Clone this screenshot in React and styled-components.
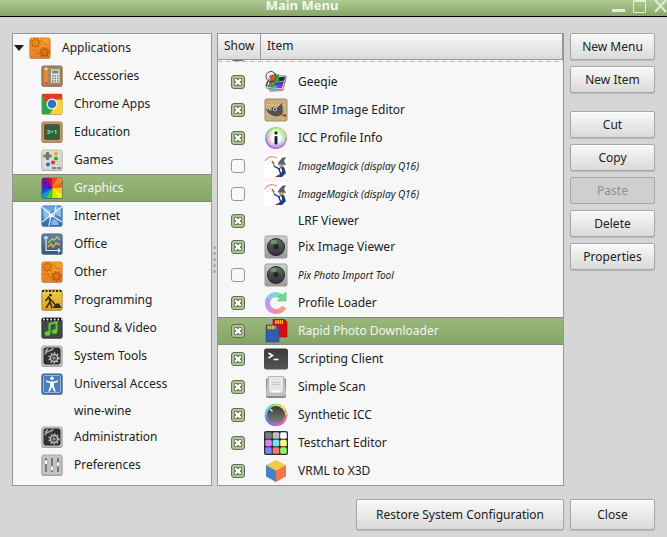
import { useLayoutEffect, useRef, useState } from "react";
import styled, { createGlobalStyle } from "styled-components";

const categories = [
   { name: "Accessories", icon: "accessories" },
   { name: "Chrome Apps", icon: "chrome" },
   { name: "Education", icon: "education" },
   { name: "Games", icon: "games" },
   { name: "Graphics", icon: "graphics" },
   { name: "Internet", icon: "internet" },
   { name: "Office", icon: "office" },
   { name: "Other", icon: "other" },
   { name: "Programming", icon: "programming" },
   { name: "Sound & Video", icon: "sound" },
   { name: "System Tools", icon: "system" },
   { name: "Universal Access", icon: "access" },
   { name: "wine-wine" },
   { name: "Administration", icon: "system" },
   { name: "Preferences", icon: "preferences" },
];

const launchers = [
   { id: 0, name: "", shown: true },
   { id: 1, name: "Geeqie", icon: "geeqie", shown: true },
   { id: 2, name: "GIMP Image Editor", icon: "gimp", shown: true },
   { id: 3, name: "ICC Profile Info", icon: "iccInfo", shown: true },
   { id: 4, name: "ImageMagick (display Q16)", icon: "magick", shown: false },
   { id: 5, name: "ImageMagick (display Q16)", icon: "magick", shown: false },
   { id: 6, name: "LRF Viewer", shown: true, short: true },
   { id: 7, name: "Pix Image Viewer", icon: "pix", shown: true },
   { id: 8, name: "Pix Photo Import Tool", icon: "pix", shown: false },
   { id: 9, name: "Profile Loader", icon: "loader", shown: true },
   { id: 10, name: "Rapid Photo Downloader", icon: "rapid", shown: true },
   { id: 11, name: "Scripting Client", icon: "terminal", shown: true },
   { id: 12, name: "Simple Scan", icon: "scan", shown: true },
   { id: 13, name: "Synthetic ICC", icon: "synthetic", shown: true },
   { id: 14, name: "Testchart Editor", icon: "testchart", shown: true },
   { id: 15, name: "VRML to X3D", icon: "vrml", shown: true },
];

// rounded square that most of the category icons sit on
const Tile = ({ fill, stroke }) => (
   <>
      <rect x="1.5" y="2.5" width="21" height="20.5" rx="2" fill="#000" opacity=".35" />
      <rect x="2" y="2" width="20" height="20" rx="1.5" fill={fill} stroke={stroke} />
   </>
);

const Gear = ({ x, y, r, color, width = 1.6 }) => (
   <g transform={`translate(${x} ${y})`} stroke={color} fill="none">
      <circle r={r} strokeWidth={width} />
      <circle r={r + 1.4} strokeWidth="1.6" strokeDasharray="1.5 1.7" />
      <circle r={r / 3} strokeWidth="1" />
   </g>
);

const wedge = (i, n, r) => {
   const a = (i / n) * Math.PI * 2;
   const b = ((i + 1) / n) * Math.PI * 2;
   return `M12 12L${12 + r * Math.sin(a)} ${12 - r * Math.cos(a)}L${12 + r * Math.sin(b)} ${12 - r * Math.cos(b)}Z`;
};

const wheel = ["#f4442e", "#f98b1c", "#f9601c", "#fdc70c", "#f8f400", "#c5ee0a", "#4ed321", "#1699c9", "#2347dc", "#5a1cc0", "#7c0a9e", "#c80d6b"];
const ring = ["#e9e66b", "#b8ec5c", "#79e86c", "#58e8b5", "#58d5ec", "#5b95f4", "#7a68f2", "#b65df0", "#f05be2", "#f5609c", "#f67d6a", "#f3b962"];

// ring runs clockwise from the top right
const Ring = ({ width }) => {
   const point = (i) => {
      const a = ((9 - i) / 12) * Math.PI * 2;
      return `${12 + 10 * Math.sin(a)} ${12 - 10 * Math.cos(a)}`;
   };
   return ring.map((c, i) => (
      <path
         key={c}
         d={`M${point(i + 7)}A10 10 0 0 0 ${point(i + 8.1)}`}
         stroke={c}
         strokeWidth={width}
         fill="none"
      />
   ));
};

const icons = {
   other: (
      <>
         <Tile fill="url(#orange)" stroke="#e0842a" />
         <Gear x={7.5} y={7} r={3.2} color="#cf6f0c" />
         <Gear x={16.5} y={16.5} r={3.2} color="#bf590e" />
         <path d="M3 14c3-1 4 0 6 1l1 4M13 3l3 5 5 1" stroke="#d67a18" strokeWidth="1.2" fill="none" />
      </>
   ),
   accessories: (
      <>
         <Tile fill="#a98158" stroke="#8f6b47" />
         <path d="M3 4.5h18M3 9h18M3 14h18M3 19h18" stroke="#c29a6e" />
         <path d="M4.5 6l1.700-3.5 1.700 3.5v14H4.500z" fill="#f08a24" />
         <path d="M4.5 6l1.700-3.5L7.900 6z" fill="#f3dfc0" />
         <path d="M4.500 18h3.400v2.500H4.500z" fill="#d55" />
         <rect x="10.5" y="5" width="9.5" height="14" rx="1" fill="#e9e9e3" stroke="#7b654f" strokeWidth=".6" />
         <rect x="12" y="6.500" width="6.500" height="3" fill="#5f9b82" />
         <path d="M12 12h7M12 14.500h7M12 17h7" stroke="#777" strokeWidth="1.300" strokeDasharray="1.500 1" />
      </>
   ),
   chrome: (
      <>
         <Tile fill="#fdd23a" stroke="#d7b63b" />
         <path d="M2 2h20v6H12L8 14 2 4z" fill="#dd3b2c" />
         <path d="M2 4l6 9 5 4-3 5H2z" fill="#2fa14f" />
         <path d="M12 7.500h10V22H10l5-7z" fill="#fdd32f" />
         <circle cx="12" cy="12" r="5.500" fill="#f4f4f4" />
         <circle cx="12" cy="12" r="4.300" fill="#3572b8" />
      </>
   ),
   education: (
      <>
         <Tile fill="#c69a68" stroke="#a57a4c" />
         <rect x="4.500" y="4.500" width="15" height="15" rx="1" fill="#2d6145" stroke="#6b4d2c" />
         <text x="12" y="14" textAnchor="middle" fontFamily="Noto Sans, sans-serif" fontSize="6" fontWeight="700" fill="#b7e08c">3+1</text>
      </>
   ),
   games: (
      <>
         <Tile fill="#dcdcd2" stroke="#c1c1b6" />
         <path d="M6 4h3v2.500h2.500v3H9V12H6V9.500H3.500v-3H6z" fill="#77776f" />
         <circle cx="16" cy="5.500" r="2" fill="#f0a91c" />
         <circle cx="16" cy="10.500" r="2" fill="#2eaa2e" />
         <circle cx="13" cy="14.500" r="2" fill="#e23325" />
         <circle cx="8" cy="16.500" r="2" fill="#2a6cdc" />
         <path d="M12 20h9" stroke="#6b6b63" strokeWidth="1.500" strokeDasharray="4 1" />
         <path d="M17 14h4M17 16.500h4" stroke="#aaa99e" strokeDasharray="1 1" />
      </>
   ),
   graphics: (
      <>
         <Tile fill="#555" stroke="#6b6b6b" />
         <g clipPath="url(#tileClip)">
            {wheel.map((c, i) => (
               <path key={c} d={wedge(i, 12, 16)} fill={c} stroke={c} strokeWidth=".3" />
            ))}
            <path d="M12 12c-3-3-4-6-4-10M12 12c-4-1-7-3-9-6M12 12c-4 1-7 1-10 0M12 12c1 4 0 7-2 10" stroke="#0003" fill="none" strokeWidth=".8" />
         </g>
      </>
   ),
   internet: (
      <>
         <Tile fill="url(#blue)" stroke="#3c78b7" />
         <path d="M3 6c4-3 5 1 8 0l-2 6-5 3zM14 4c3-1 5 0 7 3v6l-5-2zM12 16c3-2 6 0 7 5h-8z" fill="#9cc7ee" opacity=".8" />
         <path d="M2 3l9 8 11-8M11 11L9 22M2 18l9-7 11 7M16 2l-2 10" stroke="#e6f3fd" strokeWidth="1.200" fill="none" />
         <circle cx="11" cy="11.500" r="2" fill="#fff" />
      </>
   ),
   office: (
      <>
         <Tile fill="url(#slate)" stroke="#49627f" />
         <path d="M6 4.500v14h14M4 6.500l2-2 2 2M18 16.500l2 2-2 2" stroke="#e3e8ee" strokeWidth="1.200" fill="none" />
         <path d="M8 11l4-4 2 1 3-3 3 3" stroke="#a9cf45" strokeWidth="1.500" fill="none" />
         <path d="M8 15l3-3 2 3 3-4 4 2" stroke="#e8b12c" strokeWidth="1.500" fill="none" />
      </>
   ),
   programming: (
      <>
         <Tile fill="url(#yellow)" stroke="#c69426" />
         <path d="M2 3h20" stroke="#2e2a20" strokeWidth="2" strokeDasharray="2 1.500" />
         <circle cx="10.500" cy="7.200" r="1.400" fill="#332b16" />
         <path d="M9 8.500L5.500 13M9 9l1 5-4 6M10 14l2 6M9 10l4 4 3 4" stroke="#332b16" strokeWidth="1.500" fill="none" />
         <path d="M12.500 20l4-4.500h2.500l2.500 4.500z" fill="#332b16" />
      </>
   ),
   sound: (
      <>
         <Tile fill="#464646" stroke="#343434" />
         <path d="M2 3.500h20" stroke="#111" strokeWidth="3" />
         <path d="M3 3.500h19" stroke="#eee" strokeWidth="2" strokeDasharray="1.800 1.800" />
         <path d="M9.500 17V8l7-2v9.500" stroke="#56d42b" strokeWidth="2" fill="none" />
         <ellipse cx="7.500" cy="17.500" rx="2.800" ry="2.300" fill="#56d42b" />
         <ellipse cx="14.500" cy="15.500" rx="2.800" ry="2.300" fill="#56d42b" />
      </>
   ),
   system: (
      <>
         <Tile fill="#c9c9c9" stroke="#a8a8a8" />
         <rect x="4" y="4" width="16" height="16" rx="1.500" fill="#333" stroke="#222" />
         <Gear x={14} y={14} r={3.500} color="#bcbcbc" width={1.400} />
         <path d="M4.500 10c2-1 2-3 4-3s3-2 5-2.500M5 7.500l3-3" stroke="#a9a9a9" strokeWidth="1.600" fill="none" />
      </>
   ),
   access: (
      <>
         <Tile fill="#4c7fb4" stroke="#2f5f95" />
         <rect x="3.500" y="3.500" width="17" height="17" rx="1" fill="none" stroke="#90b5da" />
         <circle cx="12" cy="6.200" r="1.700" fill="#fff" />
         <path d="M6 8.500l4.500 1h3l4.500-1v1.500l-4 1v3.500l1.800 5h-1.600L12 15l-2.200 4.500H8.200l1.800-5V11l-4-1z" fill="#fff" />
      </>
   ),
   preferences: (
      <>
         <Tile fill="#c4c4c4" stroke="#a5a5a5" />
         <path d="M6 5v14M12 5v14M18 5v14" stroke="#555" strokeWidth="1.400" />
         <g fill="#f6f6f6" stroke="#777" strokeWidth=".6">
            <rect x="4.200" y="7" width="3.600" height="4.500" rx="1" />
            <rect x="10.200" y="13" width="3.600" height="4.500" rx="1" />
            <rect x="16.200" y="9" width="3.600" height="4.500" rx="1" />
         </g>
      </>
   ),
   geeqie: (
      <>
         <path d="M3 17l3 5 13-1 4-14-1-1z" fill="#555" opacity=".5" />
         <path d="M6 5l16 1-3 14-17-2z" fill="#fff" stroke="#666" strokeWidth=".7" />
         <path d="M6 6l6-3v9l-7 3z" fill="#c33b1e" />
         <path d="M11 5l4-1v8l-5 1z" fill="#2ea43a" />
         <path d="M15 7l6-.5-.7 4-5.300 1z" fill="#222a44" />
         <path d="M10 13l10-2-1 4-9 0z" fill="#2447c8" />
         <path d="M4 15l7-2-1 5-7-1z" fill="#1fa653" />
         <path d="M10 14.500h9l-1 4-9-.500z" fill="#a92bb8" />
         <path d="M9 16h4v2.500H9z" fill="#28c3cf" />
         <circle cx="7" cy="6.500" r="5" fill="#fff" fillOpacity=".15" stroke="#444" />
         <path d="M4 11l-2 5" stroke="#444" strokeWidth="1.500" />
      </>
   ),
   gimp: (
      <>
         <rect x="1" y="1" width="22" height="22" rx="1.500" fill="#c9ac7c" stroke="#a58a61" />
         <path d="M2 7h20M2 17h20" stroke="#d9bf92" />
         <path d="M2 11c2 1 3 0 5-1s4 0 6 0l5-5 1 9c-1 4-5 5-9 4s-6-3-8-7z" fill="#53504b" />
         <circle cx="6.500" cy="11" r="1.500" fill="#eee" />
         <circle cx="11" cy="11.500" r="1.800" fill="#eee" />
         <circle cx="6.800" cy="11" r=".8" />
         <circle cx="11" cy="11.500" r=".9" />
         <path d="M13 15l8 3" stroke="#8a5529" strokeWidth="1.300" />
         <path d="M19 16l3 1v2z" fill="#222" />
      </>
   ),
   iccInfo: (
      <>
         <circle cx="12" cy="12" r="10.800" fill="#8a8a8a" />
         {ring.map((c, i) => (
            <path key={c} d={wedge(i, 12, 10)} fill={ring[(i + 1) % 12]} />
         ))}
         <Ring width={1.300} />
         <circle cx="12" cy="12" r="9.700" fill="url(#halo)" />
         <rect x="10.500" y="5.500" width="3" height="3" rx="1" fill="#222" />
         <rect x="10.500" y="10" width="3" height="8.500" rx="1" fill="#222" />
      </>
   ),
   magick: (
      <>
         <rect width="24" height="24" fill="#fff" />
         <path d="M1 7c3-5 8-5 12-3" stroke="#f08a8a" strokeWidth="1.300" fill="none" />
         <path d="M3 10l2-1M5 5l1 3M9 2l1 2M7 9l2 1" stroke="#d9cc90" strokeWidth=".8" />
         <path d="M14 9l4-5 4-1-2 4 2 4-8-.500z" fill="#59616d" />
         <path d="M15 10.500h5l-1 3.500h-3z" fill="#c98a68" />
         <path d="M9 9l2 3 4 2 5-1 2 6-4 4h-7l5-3-2-5-4-2z" fill="#233a86" />
         <path d="M16 14l2 1v4l-2-2z" fill="#eee" />
         <path d="M8 7l2 3" stroke="#c05c3b" strokeWidth="1.500" />
         <path d="M12 23l4-2" stroke="#c0392b" />
      </>
   ),
   pix: (
      <>
         <rect x="1" y="1" width="22" height="22" rx="1.500" fill="url(#steel)" stroke="#9a9a9a" />
         <circle cx="12" cy="12" r="9" fill="#222" />
         <circle cx="12" cy="12" r="8" fill="url(#lens)" />
         <circle cx="12" cy="12" r="3" fill="#1e2a1e" stroke="#3d4d3c" strokeWidth=".7" />
         <ellipse cx="9.500" cy="7" rx="3.500" ry="2" fill="#b7cdb0" opacity=".4" />
      </>
   ),
   loader: (
      <>
         <g fill="none" strokeWidth="5">
            <path d="M18 6.500A8.500 8.500 0 0 0 11 3.800" stroke="#7fdcae" />
            <path d="M11.500 3.700A8.500 8.500 0 0 0 4.500 8" stroke="#8acbe6" />
            <path d="M4.700 7.500A8.500 8.500 0 0 0 4 15" stroke="#a6a4ee" />
            <path d="M3.800 14.500A8.500 8.500 0 0 0 9 20" stroke="#dc8fe1" />
            <path d="M8.500 19.800A8.500 8.500 0 0 0 15 20" stroke="#f787ad" />
            <path d="M14.500 20.200A8.500 8.500 0 0 0 20 16" stroke="#f69c7c" />
         </g>
         <path d="M22 1.500v8.500h-8.500l2.800-2.800-2-2L18 4z" fill="#6edb91" stroke="#4dbb76" strokeWidth=".6" />
      </>
   ),
   rapid: (
      <>
         <path d="M9 0h11l3 3v15H9z" fill="#d40f0f" stroke="#a50b0b" strokeWidth=".6" />
         <path d="M11 3h8" stroke="#f2c32a" strokeWidth="3.500" strokeDasharray="1.700 .6" />
         <path d="M2 6h10l3 3v14H2z" fill="#2f5fa6" stroke="#254a83" strokeWidth=".6" />
         <path d="M3.500 8.500h8" stroke="#f2c32a" strokeWidth="3.500" strokeDasharray="1.700 .6" />
      </>
   ),
   terminal: (
      <>
         <rect x="0" y="1.500" width="24" height="21" rx="2.500" fill="url(#dark)" />
         <path d="M4.500 6l4 2.500-4 2.500M9.500 12.500h5" stroke="#fff" strokeWidth="1.600" fill="none" />
      </>
   ),
   scan: (
      <>
         <rect x="2" y="3" width="20" height="20" rx="2" fill="#8b8b8b" />
         <path d="M4 1h16l2 18a2 2 0 0 1-2 2H4a2 2 0 0 1-2-2z" fill="#c5c5c5" />
         <path d="M4.500 1.500h15V18h-15z" fill="#e6e6e6" stroke="#aaa" strokeWidth=".6" />
         <path d="M9 7.500h7M9 9.500h7" stroke="#bbb" strokeWidth=".8" />
         <path d="M8 16.500h8" stroke="#fff" strokeWidth="2" strokeDasharray="1.600 .5" />
         <circle cx="18.500" cy="20.500" r="1" fill="#82e02c" />
      </>
   ),
   synthetic: (
      <>
         <circle cx="12" cy="12" r="11.300" fill="#9a9a9a" />
         <Ring width={2.200} />
         <circle cx="12" cy="12" r="9" fill="url(#knob)" />
         <path d="M6 6l2.500 2.500" stroke="#eee" strokeWidth="1.200" />
      </>
   ),
   testchart: (
      <>
         <rect width="24" height="24" rx="2" fill="#2f2f2f" />
         {["#7b7b7b", "#bdbdbd", "#fff", "#e07cf7", "#74e5fb", "#fcfa7c", "#7488fa", "#fb7373", "#8df76b"].map((c, i) => (
            <rect key={c} x={1.2 + (i % 3) * 7.5} y={1.2 + Math.floor(i / 3) * 7.5} width="6.600" height="6.600" rx="1.600" fill={c} />
         ))}
      </>
   ),
   vrml: (
      <>
         <path d="M12 1l10 5-10 5.500L2 6z" fill="#f6c945" />
         <path d="M2 6l10 5.500V23L2 17.500z" fill="#4a80c6" />
         <path d="M22 6l-10 5.500V23l10-5.500z" fill="#f5744a" />
      </>
   ),
};

// gradients shared by the icons
const Gradients = () => {
   const list = [
      ["orange", "#f9a52f", "#e67d22"],
      ["blue", "#72aee6", "#2567ad"],
      ["slate", "#6585ab", "#3a5270"],
      ["yellow", "#f1cd4c", "#dfa021"],
      ["steel", "#cfcfcf", "#989898"],
      ["lens", "#55724f", "#3d2a44"],
      ["dark", "#3b3b3b", "#555"],
      ["knob", "#3a3a3a", "#828282"],
   ];
   return (
      <Defs aria-hidden="true">
         <defs>
            {list.map(([id, from, to]) => (
               <linearGradient key={id} id={id} x1="0" y1="0" x2="0" y2="1">
                  <stop offset="0" stopColor={from} />
                  <stop offset="1" stopColor={to} />
               </linearGradient>
            ))}
            <radialGradient id="halo">
               <stop offset=".4" stopColor="#fff" />
               <stop offset="1" stopColor="#fff" stopOpacity=".25" />
            </radialGradient>
            <clipPath id="tileClip">
               <rect x="2" y="2" width="20" height="20" rx="1.500" />
            </clipPath>
         </defs>
      </Defs>
   );
};

const Icon = ({ name }) => (
   <IconBox viewBox="0 0 24 24" aria-hidden="true">
      {icons[name]}
   </IconBox>
);

const App = () => {
   const [category, setCategory] = useState("Graphics");
   const [selected, setSelected] = useState(10);
   const [items, setItems] = useState(launchers);
   const listRef = useRef(null);

   useLayoutEffect(() => {
      listRef.current.scrollTop = listRef.current.scrollHeight;
   }, []);

   const handleToggle = (id) => {
      setItems(items.map((m) => (m.id === id ? { ...m, shown: !m.shown } : m)));
   };

   return (
      <Window>
         <GlobalStyle />
         <Gradients />
         <TitleBar>
            <Title>Main Menu</Title>
            <WindowControls>
               <ControlButton aria-label="Minimize">
                  <svg width="13" height="13"><path d="M0 10.500h13" stroke="currentColor" strokeWidth="3" /></svg>
               </ControlButton>
               <ControlButton aria-label="Maximize">
                  <svg width="13" height="13"><path d="M.5 1v11.500h12V1" stroke="currentColor" fill="none" /><path d="M0 1h13" stroke="currentColor" strokeWidth="2" /></svg>
               </ControlButton>
               <ControlButton aria-label="Close window">
                  <svg width="13" height="13"><path d="M1 0l11 12M12 0L1 12" stroke="currentColor" strokeWidth="2" /></svg>
               </ControlButton>
            </WindowControls>
         </TitleBar>
         <Body>
            <Panels>
               <Tree>
                  <TreeRow $root>
                     <Arrow viewBox="0 0 10 6" aria-hidden="true"><path d="M0 0h10L5 6z" fill="#1a1a1a" /></Arrow>
                     <Icon name="other" />
                     Applications
                  </TreeRow>
                  {categories.map((c) => (
                     <TreeRow
                        key={c.name}
                        $short={!c.icon}
                        $active={c.name === category}
                        onClick={() => setCategory(c.name)}
                     >
                        <Icon name={c.icon} />
                        {c.name}
                     </TreeRow>
                  ))}
               </Tree>
               <Handle>
                  {[0, 1, 2, 3, 4].map((n) => (
                     <Dot key={n} />
                  ))}
               </Handle>
               <ItemTable>
                  <Head>
                     <HeadRow>
                        <HeadCell>Show</HeadCell>
                        <HeadCell>Item</HeadCell>
                     </HeadRow>
                  </Head>
                  <ItemBody ref={listRef}>
                     {items.map((m) => (
                        <ItemRow
                           key={m.id}
                           $short={m.short}
                           $active={m.id === selected}
                           onClick={() => setSelected(m.id)}
                        >
                           <CheckCell>
                              <Check
                                 type="checkbox"
                                 id={`show-${m.id}`}
                                 checked={m.shown}
                                 onChange={() => handleToggle(m.id)}
                              />
                           </CheckCell>
                           <NameCell>
                              <Icon name={m.icon} />
                              <ItemName htmlFor={`show-${m.id}`} $hidden={!m.shown}>{m.name}</ItemName>
                           </NameCell>
                        </ItemRow>
                     ))}
                  </ItemBody>
               </ItemTable>
               <Actions>
                  <ActionGroup>
                     <Button>New Menu</Button>
                     <Button>New Item</Button>
                  </ActionGroup>
                  <ActionGroup>
                     <Button>Cut</Button>
                     <Button>Copy</Button>
                     <Button disabled>Paste</Button>
                     <Button>Delete</Button>
                     <Button>Properties</Button>
                  </ActionGroup>
               </Actions>
            </Panels>
            <Footer>
               <Button $large>Restore System Configuration</Button>
               <Button $large>Close</Button>
            </Footer>
         </Body>
      </Window>
   );
};

const GlobalStyle = createGlobalStyle`
   * {
      box-sizing: border-box;
   }

   body {
      margin: 0;
      font: 12px/16px "Noto Sans", sans-serif;
      color: #212121;
   }

   button {
      font: inherit;
      color: inherit;
   }
`;

const Window = styled.div`
   display: flex;
   flex-direction: column;
   height: 100vh;
   background: #d6d6d6;
   overflow: hidden;
`;

const Defs = styled.svg`
   position: absolute;
   width: 0;
   height: 0;
`;

const TitleBar = styled.header`
   display: grid;
   grid-template-columns: 1fr auto;
   column-gap: 8px;
   height: 17px;
   flex-shrink: 0;
   background: linear-gradient(#b0cc95, #86a566);
   border-bottom: 1px solid black;
`;

const Title = styled.h1`
   margin: 0;
   font-size: 13px;
   line-height: 11px;
   font-weight: 700;
   text-align: center;
   color: #f3f7ef;
`;

const WindowControls = styled.div`
   display: flex;
   gap: 8px;
`;

const ControlButton = styled.button`
   display: flex;
   padding: 0;
   border: none;
   background: none;
   color: #e3ecd9;
`;

const Body = styled.main`
   display: flex;
   flex-direction: column;
   gap: 13px;
   flex: 1;
   min-height: 0;
   padding: 16px 12px 7px;
`;

const Panels = styled.div`
   display: flex;
   flex: 1;
   min-height: 0;
`;

const Tree = styled.div`
   width: 200px;
   background: #f7f7f7;
   border: 1px solid #979797;
   overflow: hidden;
`;

const selection = `
   color: #f5f5f5;
   background: linear-gradient(#9ab87c, #84a564);
   box-shadow: inset 0 1px #858b80, inset 0 -1px #858b80;
`;

const TreeRow = styled.button`
   display: flex;
   align-items: center;
   gap: 10px;
   width: 100%;
   height: ${(p) => (p.$short ? 25 : 28)}px;
   padding: 0 0 0 ${(p) => (p.$root ? 1 : 27)}px;
   border: none;
   background: none;
   ${(p) => p.$root && "svg + svg { margin-left: -6px; }"}
   ${(p) => p.$active && selection}
`;

const Arrow = styled.svg`
   width: 10px;
   height: 6px;
`;

const IconBox = styled.svg`
   width: 24px;
   height: 24px;
   flex-shrink: 0;
`;

const Handle = styled.div`
   display: flex;
   flex-direction: column;
   align-items: center;
   justify-content: center;
   gap: 3px;
   width: 5px;
`;

const Dot = styled.span`
   width: 3px;
   height: 3px;
   border-radius: 50%;
   background: #a9a9a9;
`;

const ItemTable = styled.table`
   display: flex;
   flex-direction: column;
   flex: 1;
   min-width: 0;
   background: #f7f7f7;
   border: 1px solid #979797;
`;

const Head = styled.thead`
   display: block;
`;

const HeadRow = styled.tr`
   display: grid;
   grid-template-columns: 43px 1fr;
   height: 26px;
   background: linear-gradient(#f8f8f8, #dcdcdc);
   border-bottom: 1px solid #979797;
`;

const HeadCell = styled.th`
   padding: 4px 6px;
   font-weight: 400;
   text-align: left;
   border-right: 1px solid #979797;
`;

const ItemBody = styled.tbody`
   display: block;
   flex: 1;
   min-height: 0;
   overflow-y: auto;
   scrollbar-width: none;
   background: repeating-linear-gradient(90deg, #bdbdbd 0 5px, transparent 5px 8px) 0 1px / 100% 1px no-repeat;
`;

const ItemRow = styled.tr`
   display: grid;
   grid-template-columns: 40px 1fr;
   align-items: center;
   height: ${(p) => (p.$short ? 25 : 28)}px;
   ${(p) => p.$active && selection}
`;

const CheckCell = styled.td`
   display: flex;
   justify-content: center;
   padding: 0;
`;

const NameCell = styled.td`
   display: flex;
   align-items: center;
   gap: 10px;
   padding: 0 6px;
`;

const ItemName = styled.label`
   ${(p) => p.$hidden && "font-size: 10px; font-style: italic;"}
`;

const notch = "linear-gradient(#7a7a7a, #7a7a7a)";

const Check = styled.input`
   appearance: none;
   width: 14px;
   height: 14px;
   margin: 0;
   border: 1px solid #999;
   border-radius: 3px;
   background: #f9f9f9;

   /* white cross in a dark frame */
   &:checked {
      border-color: #666b61;
      background:
         ${notch} 50% 3px / 2px 1px no-repeat,
         ${notch} 50% 8px / 2px 1px no-repeat,
         ${notch} 3px 50% / 1px 2px no-repeat,
         ${notch} 8px 50% / 1px 2px no-repeat,
         linear-gradient(white, white) center / 6px 6px no-repeat,
         linear-gradient(#7a8372, #7a8372) center / 8px 8px no-repeat,
         #a9c888;
   }
`;

const Actions = styled.div`
   display: flex;
   flex-direction: column;
   gap: 18px;
   width: 85px;
   margin-left: 6px;
`;

const ActionGroup = styled.div`
   display: flex;
   flex-direction: column;
   gap: 6px;
`;

const Button = styled.button`
   min-width: 85px;
   height: ${(p) => (p.$large ? 31 : 27)}px;
   padding: 0 ${(p) => (p.$large ? 19 : 6)}px;
   border: 1px solid #a6a6a6;
   border-radius: 2px;
   background: linear-gradient(#f9f9f9, #dadada);
   box-shadow: inset 0 1px #fff, 0 1px 1px #0002;

   &:disabled {
      color: #8f8f8f;
      background: #cfcfcf;
      box-shadow: none;
   }
`;

const Footer = styled.footer`
   display: flex;
   justify-content: flex-end;
   gap: 6px;
`;

export default App;
